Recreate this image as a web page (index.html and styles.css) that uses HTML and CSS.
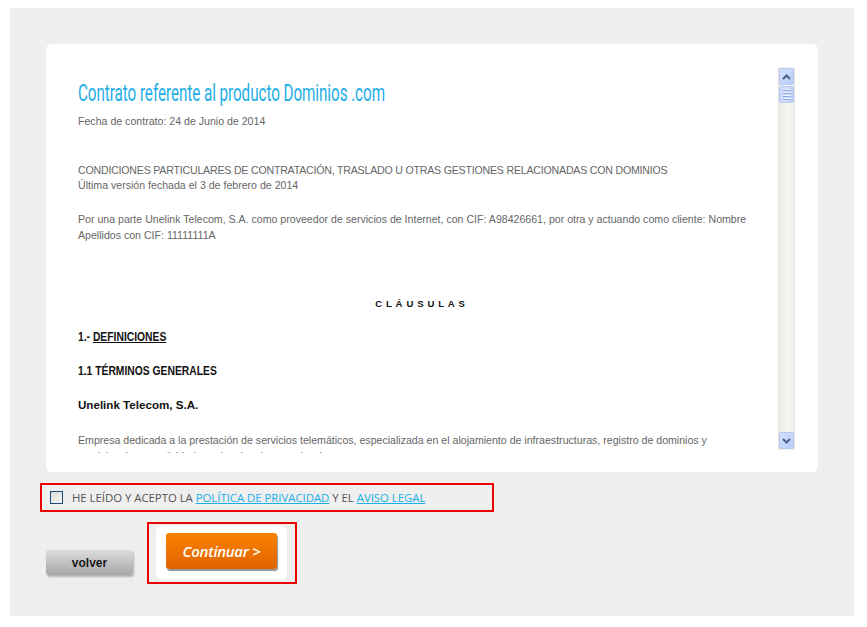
FILE: index.html
```html
<!DOCTYPE html>
<html lang="es">
<head>
<meta charset="utf-8">
<title>Contrato</title>
<link rel="stylesheet" href="styles.css">
</head>
<body>
<div class="wrap">
  <div class="card">
    <div class="scrollbox">
      <div class="content">
        <h1 class="title"><span>Contrato referente al producto Dominios .com</span></h1>
        <p class="date">Fecha de contrato: 24 de Junio de 2014</p>
        <p class="cond"><span class="caps">CONDICIONES PARTICULARES DE CONTRATACIÓN, TRASLADO U OTRAS GESTIONES RELACIONADAS CON DOMINIOS</span><br>Última versión fechada el 3 de febrero de 2014</p>
        <p class="par">Por una parte Unelink Telecom, S.A. como proveedor de servicios de Internet, con CIF: A98426661, por otra y actuando como cliente: Nombre Apellidos con CIF: 11111111A</p>
        <p class="clausulas">CLÁUSULAS</p>
        <p class="head"><span class="narrow">1.- <u>DEFINICIONES</u></span></p>
        <p class="head head2"><span class="narrow">1.1 TÉRMINOS GENERALES</span></p>
        <p class="sub">Unelink Telecom, S.A.</p>
        <p class="par">Empresa dedicada a la prestación de servicios telemáticos, especializada en el alojamiento de infraestructuras, registro de dominios y<br>servicios de conectividad a redes de telecomunicaciones.</p>
      </div>
      <div class="scrollbar">
        <div class="sb-btn"><svg width="9" height="6" viewBox="0 0 9 6"><path d="M1 5 L4.5 1.5 L8 5" fill="none" stroke="#4d6185" stroke-width="2"/></svg></div>
        <div class="sb-thumb"><span></span><span></span><span></span><span></span></div>
        <div class="sb-track"></div>
        <div class="sb-btn"><svg width="9" height="6" viewBox="0 0 9 6"><path d="M1 1 L4.5 4.5 L8 1" fill="none" stroke="#4d6185" stroke-width="2"/></svg></div>
      </div>
    </div>
  </div>
  <div class="accept">
    <span class="check"></span>
    <span class="accept-text">HE LEÍDO Y ACEPTO LA <a href="#">POLÍTICA DE PRIVACIDAD</a> Y EL <a href="#">AVISO LEGAL</a></span>
  </div>
  <div class="actions">
    <button class="volver">volver</button>
    <div class="cont-frame">
      <div class="cont-box">
        <button class="continuar">Continuar &gt;</button>
      </div>
    </div>
  </div>
</div>
</body>
</html>
```
FILE: styles.css
```css
html, body { margin: 0; padding: 0; background: #fff; }
body { font-family: "Liberation Sans", Arial, sans-serif; }

.wrap {
  margin: 8px 0 0 10px;
  width: 844px;
  height: 608px;
  background: #efefef;
  padding-top: 36px;
  box-sizing: border-box;
}

.card {
  margin-left: 36px;
  width: 772px;
  height: 428px;
  box-sizing: border-box;
  background: #fff;
  border-radius: 6px;
  padding: 23px 23px 19px 16px;
}

.scrollbox {
  display: flex;
  align-items: flex-start;
  height: 386px;
  overflow: hidden;
}

.content {
  width: 684px;
  padding-left: 16px;
  flex: none;
  font-size: 10.6px;
  color: #666;
  line-height: 15px;
}

.title {
  margin: 13px 0 8px;
  font-weight: normal;
  font-size: 24px;
  line-height: 26px;
  color: #1eaee7;
  white-space: nowrap;
}
.title span {
  display: inline-block;
  font-family: Roboto, "Liberation Sans", sans-serif;
  transform: scaleX(0.635);
  transform-origin: left center;
  letter-spacing: -0.1px;
}

.content p { margin: 0 0 19px; }
.content .date { margin-bottom: 34px; }
.content .cond { margin-bottom: 18px; }
.caps { letter-spacing: -0.2px; }
.content .par { line-height: 16px; }
.content .clausulas {
  margin-top: 53px;
  padding-left: 4px;
  text-align: center;
  font-weight: bold;
  font-size: 9.5px;
  letter-spacing: 3.9px;
  color: #111;
}
.content .head {
  font-weight: bold;
  font-size: 12px;
  color: #111;
}
.content .head2 { margin-bottom: 18px; }
.narrow {
  display: inline-block;
  transform: scaleX(0.86);
  transform-origin: left center;
  white-space: nowrap;
}
.content .sub {
  font-weight: bold;
  font-size: 11.6px;
  color: #111;
  margin-bottom: 20px;
}

.scrollbar {
  margin-left: 16px;
  width: 17px;
  height: 383px;
  flex: none;
  display: flex;
  flex-direction: column;
  background: linear-gradient(to right, #eeede5, #f6f5f0 60%, #f1f0ea);
  border-left: 1px solid #e6e4dc;
  border-right: 1px solid #e6e4dc;
  box-sizing: border-box;
}
.sb-btn {
  height: 15px;
  margin: 1px 0;
  border: 1px solid #b7c8f0;
  border-radius: 2px;
  background: linear-gradient(to bottom right, #d3e0fe, #b9cdfa);
  display: flex;
  align-items: center;
  justify-content: center;
}
.sb-thumb {
  height: 15px;
  border: 1px solid #b7c8f0;
  border-radius: 2px;
  background: linear-gradient(to right, #c6d6fc, #d2defd 50%, #bccffa);
  display: flex;
  flex-direction: column;
  align-items: center;
  justify-content: center;
  gap: 1px;
}
.sb-thumb span {
  display: block;
  width: 8px;
  height: 1px;
  background: #eef3fe;
  border-bottom: 1px solid #8fa8e2;
}
.sb-track { flex: 1; }

.accept {
  margin: 11px 0 0 30px;
  width: 454px;
  height: 29px;
  box-sizing: border-box;
  border: 2px solid #ee0000;
  display: flex;
  align-items: center;
  padding-left: 8px;
}
.check {
  width: 13px;
  height: 13px;
  box-sizing: border-box;
  border: 1px solid #1d4d7c;
  background: linear-gradient(to bottom right, #dcdcd6, #f5f5f3);
  flex: none;
}
.accept-text {
  margin-left: 9px;
  font-family: "Open Sans", "Liberation Sans", sans-serif;
  font-size: 11.4px;
  color: #555;
  letter-spacing: -0.03px;
  white-space: nowrap;
}
.accept-text a { color: #1ab0ea; }

.actions {
  display: flex;
  align-items: flex-start;
  margin: 10px 0 0 36px;
}
.volver {
  margin-top: 28px;
  width: 87px;
  height: 25px;
  border: none;
  border-radius: 3px;
  background: linear-gradient(to bottom, #dcdcdc, #a8a8a8);
  box-shadow: 1px 2px 2px rgba(0,0,0,0.25);
  font-family: "Liberation Sans", Arial, sans-serif;
  font-weight: bold;
  font-size: 12px;
  color: #1a1a1a;
  padding: 0;
}
.cont-frame {
  margin-left: 14px;
  width: 150px;
  height: 62px;
  box-sizing: border-box;
  border: 2px solid #ee0000;
  padding: 2px 8px 0 7px;
}
.cont-box {
  height: 54px;
  background: #fff;
  border-radius: 6px;
  padding: 7px 0 0 10px;
  box-sizing: border-box;
}
.continuar {
  width: 111px;
  height: 36px;
  border: none;
  border-radius: 3px;
  background: linear-gradient(to bottom, #fb8200, #df6400);
  box-shadow: 1px 2px 1px rgba(60,60,60,0.55);
  color: #fff;
  font-family: "Open Sans", "Liberation Sans", sans-serif;
  font-style: italic;
  font-weight: 600;
  font-size: 15px;
  letter-spacing: -0.3px;
  padding: 0;
}
```
